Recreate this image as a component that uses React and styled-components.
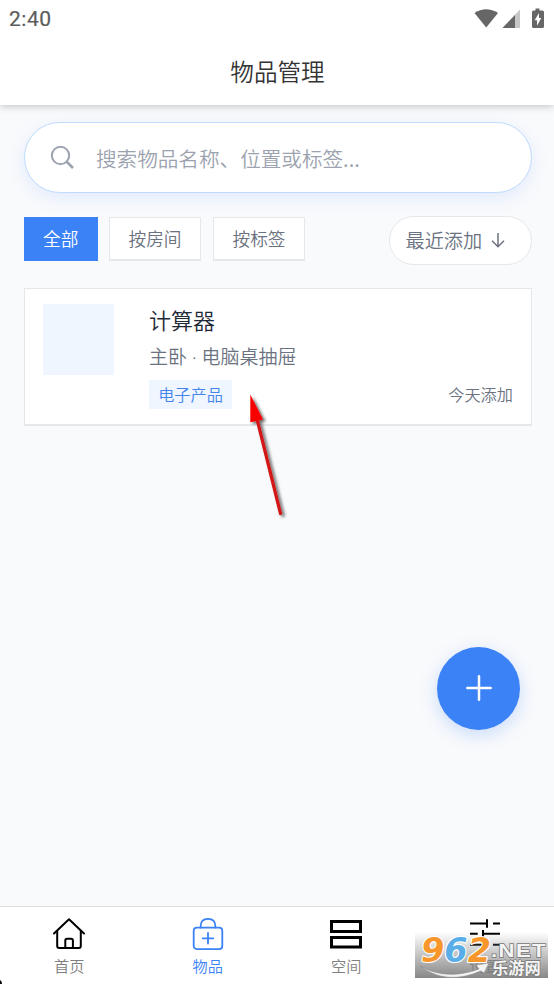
import React from "react";
import styled, { createGlobalStyle } from "styled-components";

const GlobalStyle = createGlobalStyle`
  * {
    box-sizing: border-box;
  }
  body {
    margin: 0;
    background: #f9fafc;
    font-family: Roboto, "Noto Sans CJK SC", sans-serif;
    font-weight: 350;
  }
  button, input {
    font-family: inherit;
    font-weight: inherit;
    margin: 0;
  }
`;

const Page = styled.div`
  position: relative;
  display: flex;
  flex-direction: column;
  width: 554px;
  height: 984px;
  overflow: hidden;
  background: #f9fafc;
`;

const Header = styled.header`
  flex: none;
  height: 105px;
  background: #fff;
  box-shadow: 0 1px 8px rgba(0, 0, 0, 0.24);
`;

const StatusBar = styled.div`
  display: flex;
  align-items: center;
  justify-content: space-between;
  height: 38px;
  padding: 0 9px;
`;

const Time = styled.span`
  font-family: Roboto, sans-serif;
  font-size: 21px;
  font-weight: 400;
  line-height: 38px;
  letter-spacing: 0.5px;
  color: #5c5c5c;
  -webkit-text-stroke: 0.2px #5c5c5c;
`;

const StatusIcons = styled.svg`
  display: block;
  width: 72px;
  height: 24px;
`;

const Title = styled.h1`
  margin: 0;
  font-family: "Noto Sans CJK SC", sans-serif;
  font-size: 23.6px;
  font-weight: 350;
  line-height: 66px;
  text-align: center;
  text-indent: 1px;
  color: #333;
`;

const Content = styled.main`
  flex: 1;
  padding: 17px 22px 0 24px;
`;

const SearchBox = styled.label`
  display: flex;
  align-items: center;
  gap: 21px;
  height: 71px;
  padding-left: 25px;
  border: 1.5px solid #bfdbfe;
  border-radius: 36px;
  background: #fff;
  box-shadow: 0 5px 18px rgba(59, 130, 246, 0.13);
`;

const SearchIcon = styled.svg`
  flex: none;
  width: 25px;
  height: 25px;
`;

const SearchInput = styled.input`
  flex: 1;
  height: 40px;
  padding: 0;
  border: 0;
  outline: 0;
  background: transparent;
  font-family: "Noto Sans CJK SC", sans-serif;
  font-size: 20.6px;
  &::placeholder {
    color: #9ca3af;
    opacity: 1;
  }
`;

const FilterRow = styled.div`
  display: flex;
  align-items: center;
  height: 49px;
  margin-top: 23px;
`;

const FilterTab = styled.button`
  width: ${(props) => (props.$active ? 73.5 : 92)}px;
  height: 44px;
  margin: 0 ${(props) => (props.$active ? 11.5 : 12)}px 4px 0;
  padding: 0 0 1px;
  border: ${(props) => (props.$active ? "1px solid #3b82f6" : "1px solid #e5e7eb")};
  border-bottom-width: ${(props) => (props.$active ? 1 : 2)}px;
  background: ${(props) => (props.$active ? "#3b82f6" : "#fff")};
  color: ${(props) => (props.$active ? "#fff" : "#6b7280")};
  font-family: "Noto Sans CJK SC", sans-serif;
  font-size: 17.7px;
`;

const SortButton = styled.button`
  display: flex;
  align-items: center;
  gap: 9px;
  width: 143px;
  height: 49px;
  margin-left: auto;
  padding: 0 0 2px 15.5px;
  border: 1.5px solid #e5e7eb;
  border-radius: 25px;
  background: #fff;
  color: #6b7280;
  font-family: "Noto Sans CJK SC", sans-serif;
  font-size: 19.2px;
`;

const ArrowDown = styled.svg`
  width: 14px;
  height: 18px;
`;

const ItemCard = styled.article`
  display: flex;
  height: 138px;
  margin-top: 23px;
  padding: 15px 18px;
  border: 1px solid #e5e7eb;
  border-bottom-width: 2px;
  background: #fff;
`;

const Thumb = styled.div`
  flex: none;
  width: 71px;
  height: 71px;
  background: #eff6ff;
`;

const ItemBody = styled.div`
  flex: 1;
  margin-left: 35px;
  font-family: "Noto Sans CJK SC", sans-serif;
`;

const ItemName = styled.h2`
  margin: 0;
  font-size: 22px;
  font-weight: 350;
  line-height: 31px;
  color: #1f2937;
`;

const ItemPlace = styled.p`
  margin: 6px 0 0;
  font-family: "Noto Sans", "Noto Sans CJK SC", sans-serif;
  font-size: 19px;
  line-height: 32px;
  height: 32px;
  color: #6b7280;
`;

const ItemFooter = styled.div`
  display: flex;
  align-items: center;
  justify-content: space-between;
  height: 29px;
  margin-top: 7px;
`;

const Tag = styled.span`
  width: 83px;
  background: #eff6ff;
  color: #4284ea;
  font-size: 16.2px;
  line-height: 29px;
  text-align: center;
`;

const Added = styled.span`
  font-size: 16.2px;
  line-height: 29px;
  color: #6b7280;
`;

const AddButton = styled.button`
  position: absolute;
  left: 437px;
  top: 647px;
  display: flex;
  align-items: center;
  justify-content: center;
  width: 83px;
  height: 83px;
  padding: 0 0 1px;
  border: 0;
  border-radius: 50%;
  background: #3b82f6;
  box-shadow: 0 5px 18px rgba(59, 130, 246, 0.25);
`;

const Pointer = styled.svg`
  position: absolute;
  left: 235px;
  top: 380px;
`;

const NavBar = styled.nav`
  flex: none;
  display: grid;
  grid-template-columns: repeat(4, 1fr);
  height: 78px;
  border-top: 1px solid #ddd;
  background: #fff;
`;

const NavItem = styled.a`
  display: flex;
  flex-direction: column;
  align-items: center;
  padding-top: 10px;
  color: ${(props) => (props.$active ? "#3b82f6" : "#808080")};
`;

const NavIcon = styled.svg`
  width: 34px;
  height: 34px;
`;

const NavLabel = styled.span`
  margin-top: 3px;
  font-family: "Noto Sans CJK SC", sans-serif;
  font-size: 15.2px;
  line-height: 22px;
`;

const Watermark = styled.div`
  position: absolute;
  left: 415px;
  top: 932px;
  width: 133px;
  height: 46px;
  background: linear-gradient(rgba(170, 170, 170, 0), rgba(125, 125, 125, 0.92));
  svg {
    display: block;
  }
`;

const Corner = styled.svg`
  position: absolute;
  left: 0;
  bottom: 0;
`;

const icons = {
  home: (
    <g fill="none" stroke="#000" strokeWidth="2" strokeLinejoin="round" strokeLinecap="round">
      <path d="M2 16.5 17 2.2 32 16.5" />
      <path d="M5.2 14v15q0 2 2 2h19.6q2 0 2-2V14" />
      <path d="M13.3 31v-7.5q0-1.8 1.8-1.8h4q1.8 0 1.8 1.8V31" />
    </g>
  ),
  bag: (
    <g fill="none" stroke="#3b82f6" strokeWidth="1.8" strokeLinecap="round">
      <rect x="2.7" y="10.7" width="28.6" height="21.4" rx="3" />
      <path d="M9.7 10.5V8.8q0-7 7.3-7t7.3 7v1.7M17 16v10.6M11.7 21.3h10.6" />
    </g>
  ),
  space: (
    <g fill="none" stroke="#000" strokeWidth="3">
      <path d="M2.5 4.5h29v10h-29zM2.5 20.5h29v9.5h-29z" />
    </g>
  ),
  settings: (
    <g fill="none" stroke="#000" strokeWidth="2">
      <path d="M2 6.5h17M25 6.5h7M19 2.3v8.4M2 16.7h7.7M15 16.7h17M15 13v7.4M2 27.7h17M25 27.7h7M19 24v8" />
    </g>
  )
};

const tabs = ["全部", "按房间", "按标签"];

const navItems = [
  { icon: "home", label: "首页" },
  { icon: "bag", label: "物品", active: true },
  { icon: "space", label: "空间" },
  { icon: "settings", label: "设置" }
];

const App = () => {
  return (
    <Page>
      <GlobalStyle />
      <Header>
        <StatusBar>
          <Time>2:40</Time>
          <StatusIcons viewBox="0 0 72 24">
            <path d="M1.5 6Q13 -1.5 25 6L13.2 20.5Z" fill="#666" />
            <path d="M47 2.5V21H29.5Z" fill="#c6c6c6" />
            <path d="M42 8V21H29.5Z" fill="#666" />
            <path
              d="M62.5 1.5h4v2h3q1.5 0 1.5 1.5v14.5q0 1.5-1.5 1.5h-9q-1.5 0-1.5-1.5V5q0-1.5 1.5-1.5h2z"
              fill="#666"
            />
            <path d="M66 6v5h2.3L64 18.8v-5.5h-2.4z" fill="#fff" />
          </StatusIcons>
        </StatusBar>
        <Title>物品管理</Title>
      </Header>
      <Content>
        <SearchBox>
          <SearchIcon viewBox="0 0 25 25" fill="none" stroke="#9ca3af" strokeWidth="2">
            <circle cx="10.5" cy="10.5" r="8.7" />
            <path d="M16.8 16.8 23 23" strokeWidth="2.6" />
          </SearchIcon>
          <SearchInput placeholder="搜索物品名称、位置或标签..." />
        </SearchBox>
        <FilterRow>
          {tabs.map((tab, index) => (
            <FilterTab key={tab} $active={index === 0}>
              {tab}
            </FilterTab>
          ))}
          <SortButton>
            最近添加
            <ArrowDown viewBox="0 0 14 18" fill="none" stroke="#6b7280" strokeWidth="1.5">
              <path d="M7 2v13.5M1 9.7l6 6 6-6" />
            </ArrowDown>
          </SortButton>
        </FilterRow>
        <ItemCard>
          <Thumb />
          <ItemBody>
            <ItemName>计算器</ItemName>
            <ItemPlace>主卧 · 电脑桌抽屉</ItemPlace>
            <ItemFooter>
              <Tag>电子产品</Tag>
              <Added>今天添加</Added>
            </ItemFooter>
          </ItemBody>
        </ItemCard>
      </Content>
      <NavBar>
        {navItems.map((item) => (
          <NavItem key={item.label} $active={item.active}>
            <NavIcon viewBox="0 0 34 34">{icons[item.icon]}</NavIcon>
            <NavLabel>{item.label}</NavLabel>
          </NavItem>
        ))}
      </NavBar>
      <AddButton>
        <svg width="26" height="26" stroke="#fff" strokeWidth="2.5" strokeLinecap="round">
          <path d="M13 1.3v23.4M1.3 13h23.4" />
        </svg>
      </AddButton>
      <Pointer width="65" height="145">
        <defs>
          <filter id="pointerShadow" x="-50%" y="-20%" width="220%" height="140%">
            <feDropShadow dx="2.5" dy="2" stdDeviation="1.8" floodColor="#000" floodOpacity="0.6" />
          </filter>
        </defs>
        <g filter="url(#pointerShadow)">
          <path d="M22 39 45.5 133.5" stroke="#d31216" strokeWidth="3.2" strokeLinecap="round" />
          <path d="M15.3 14.5 28 39.5 15.3 42.3Z" fill="#f90505" />
        </g>
      </Pointer>
      <Watermark>
        <svg width="133" height="46" overflow="visible">
          <path d="M5 34Q31 49 64 37L61 33 74 31 69 41 66 39Q31 54 5 34Z" fill="#f2f2f2" stroke="#888" strokeWidth="0.6" />
          <text
            x="6"
            y="30"
            fontFamily="DejaVu Sans, sans-serif"
            fontWeight="700"
            fontSize="33"
            fontStyle="italic"
            textLength="70"
            lengthAdjust="spacingAndGlyphs"
            stroke="#fff"
            strokeWidth="2.2"
            strokeLinejoin="round"
            paintOrder="stroke"
          >
            <tspan fill="#f7962a">9</tspan>
            <tspan fill="#5aaee8">6</tspan>
            <tspan fill="#f7962a">2</tspan>
          </text>
          <text
            x="76"
            y="24.5"
            fontFamily="Liberation Sans, sans-serif"
            fontWeight="700"
            fontSize="19"
            letterSpacing="1.2"
            textLength="56"
            lengthAdjust="spacingAndGlyphs"
            fill="#f4f4f4"
            stroke="#777"
            strokeWidth="1.4"
            paintOrder="stroke"
          >
            .NET
          </text>
          <text
            x="77"
            y="41.5"
            fontFamily="Noto Sans CJK SC, sans-serif"
            fontSize="16.3"
            fontWeight="700"
            fill="#f4f4f4"
            stroke="#777"
            strokeWidth="1.3"
            paintOrder="stroke"
          >
            乐游网
          </text>
        </svg>
      </Watermark>
      <Corner width="3" height="5">
        <path d="M0 1Q2 2 2 5H0Z" fill="#000" />
      </Corner>
    </Page>
  );
};

export default App;
